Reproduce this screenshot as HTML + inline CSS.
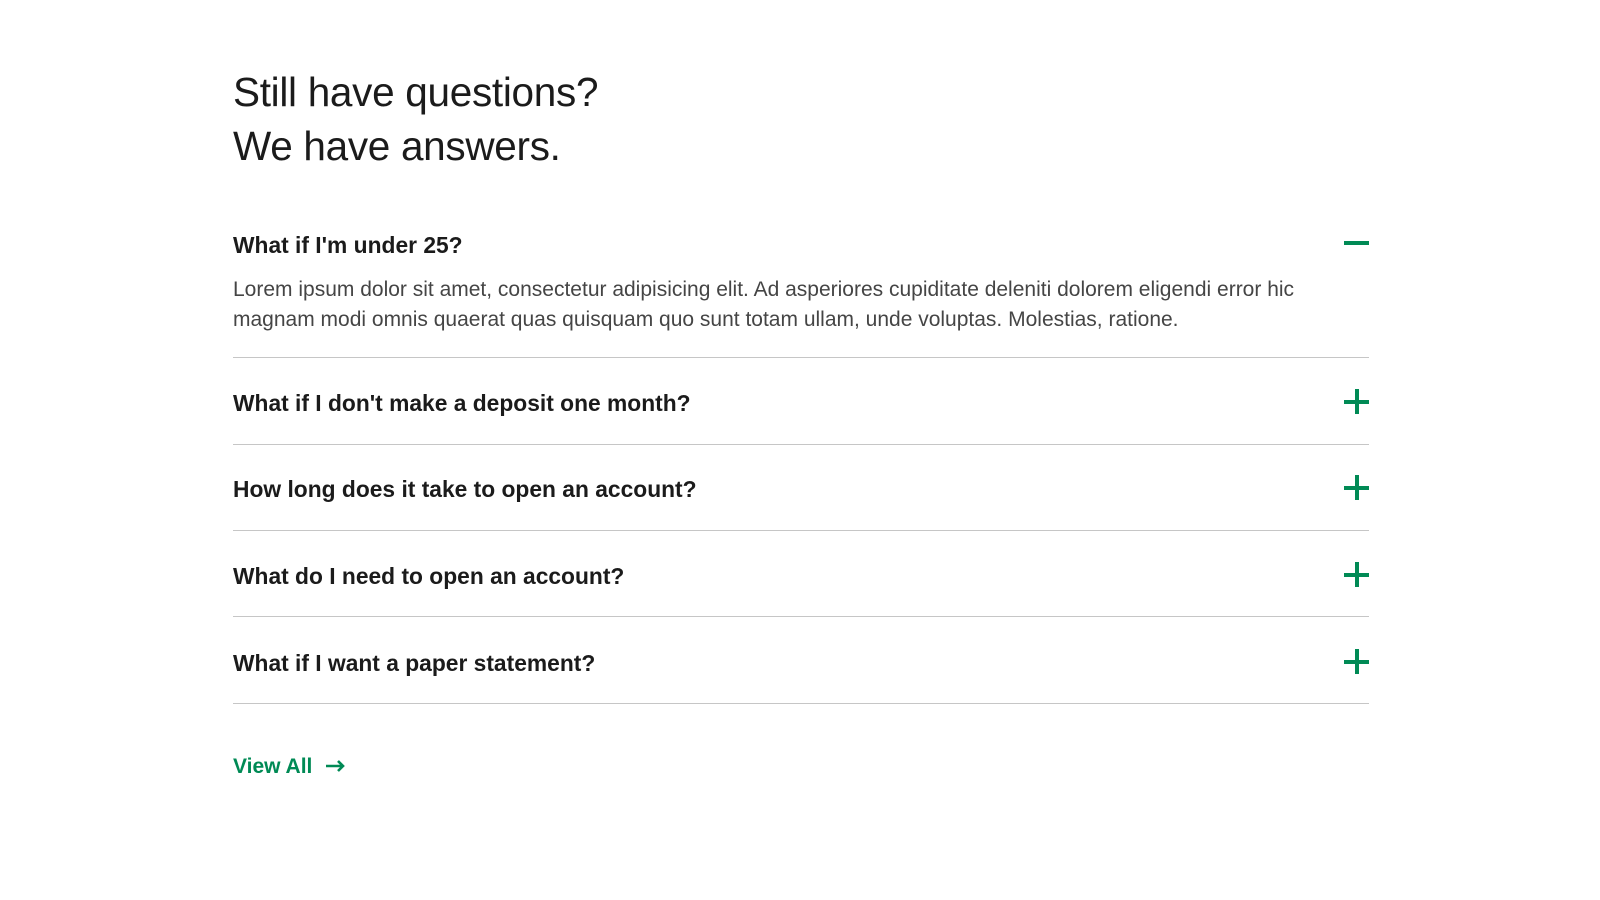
<!DOCTYPE html>
<html><head><meta charset="utf-8"><style>
body{margin:0;background:#fff;font-family:"Liberation Sans",sans-serif;color:#1b1b1b;width:1600px;height:900px;overflow:hidden}
.wrap{position:absolute;left:233px;width:1136px;top:0}
h1{position:absolute;top:65px;margin:0;font-size:40.5px;font-weight:400;line-height:54px;letter-spacing:-0.3px;color:#1b1b1b}
.q{position:absolute;left:0;width:1100px;font-size:22.8px;font-weight:700;color:#1b1b1b}
.line{position:absolute;left:0;width:1136px;height:1px;background:#c6c6c6}
.p{position:absolute;top:275px;left:0;width:1110px;font-size:21px;line-height:30px;color:#454545}
.plus,.minus{position:absolute;left:1111px;width:25px;height:25px}
.plus:before,.minus:before{content:"";position:absolute;left:0;top:10.5px;width:25px;height:4px;background:#008a55}
.plus:after{content:"";position:absolute;left:10.5px;top:0;width:4px;height:25px;background:#008a55}
.va{position:absolute;top:755px;font-size:21px;font-weight:700;color:#008a55}
</style></head><body><div class="wrap">
<h1>Still have questions?<br>We have answers.</h1>
<div class="q" style="top:232px">What if I'm under 25?</div><div class="minus" style="top:230px"></div>
<div class="p">Lorem ipsum dolor sit amet, consectetur adipisicing elit. Ad asperiores cupiditate deleniti dolorem eligendi error hic magnam modi omnis quaerat quas quisquam quo sunt totam ullam, unde voluptas. Molestias, ratione.</div>
<div class="line" style="top:357px"></div>
<div class="q" style="top:390px">What if I don't make a deposit one month?</div><div class="plus" style="top:389px"></div>
<div class="line" style="top:444px"></div>
<div class="q" style="top:476px">How long does it take to open an account?</div><div class="plus" style="top:475px"></div>
<div class="line" style="top:530px"></div>
<div class="q" style="top:563px">What do I need to open an account?</div><div class="plus" style="top:562px"></div>
<div class="line" style="top:616px"></div>
<div class="q" style="top:650px">What if I want a paper statement?</div><div class="plus" style="top:649px"></div>
<div class="line" style="top:703px"></div>
<div class="va">View All <svg width="20" height="14" viewBox="0 0 20 14" style="margin-left:8px;vertical-align:0px"><path d="M0 7H17M12 2L17 7L12 12" stroke="#008a55" stroke-width="2.6" fill="none"/></svg></div>
</div></body></html>
